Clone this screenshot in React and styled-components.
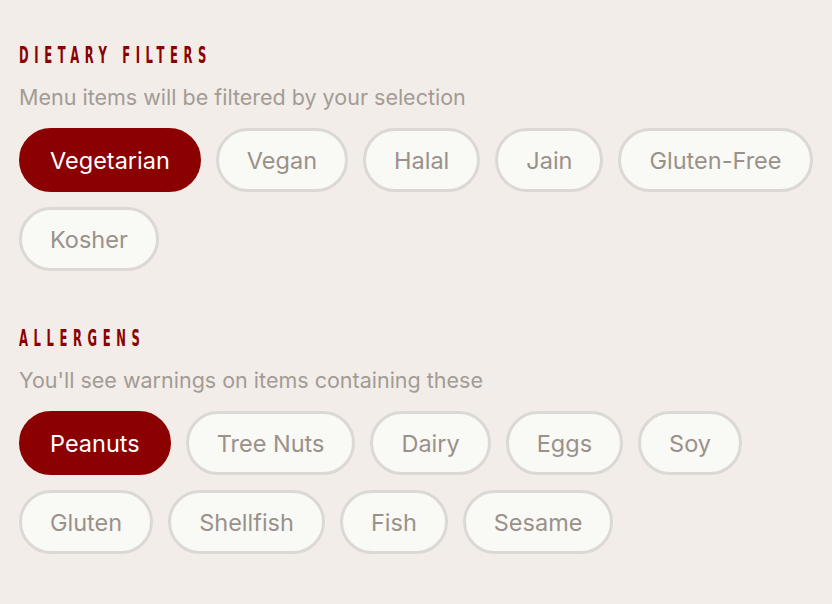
import styled, { createGlobalStyle } from "styled-components";

const Global = createGlobalStyle`
  html, body {
    margin: 0;
    padding: 0;
    background: #f2ede8;
  }
  body {
    font-family: Inter, "Noto Sans", sans-serif;
  }
`;

const Page = styled.div`
  padding: 40px 19px;
  display: flex;
  flex-direction: column;
  gap: 52px;
`;

const Section = styled.section`
  display: flex;
  flex-direction: column;
`;

// condensed display heading, squeezed to match the narrow caps
const Heading = styled.h2`
  margin: 0;
  font-family: "DejaVu Sans Condensed", "Liberation Sans Narrow", sans-serif;
  font-weight: 700;
  font-size: 23px;
  line-height: 30px;
  letter-spacing: 10px;
  color: #8b0000;
  text-transform: uppercase;
  transform: scaleX(0.56);
  transform-origin: left center;
  white-space: nowrap;
`;

const Sub = styled.p`
  margin: 13px 0 17px;
  font-size: 21.5px;
  line-height: 28px;
  color: #a39b95;
`;

const Chips = styled.div`
  display: flex;
  flex-wrap: wrap;
  gap: 15px;
`;

const Chip = styled.button`
  box-sizing: border-box;
  height: 64px;
  padding: 0 28px;
  border-radius: 32px;
  border: 3px solid ${(p) => (p.$active ? "#8b0000" : "#dcd9d4")};
  background: ${(p) => (p.$active ? "#8b0000" : "#f9f9f5")};
  color: ${(p) => (p.$active ? "#ffffff" : "#9a918b")};
  font-family: Inter, "Noto Sans", sans-serif;
  font-size: 23.5px;
  cursor: pointer;
`;

const dietary = ["Vegetarian", "Vegan", "Halal", "Jain", "Gluten-Free", "Kosher"];
const allergens = ["Peanuts", "Tree Nuts", "Dairy", "Eggs", "Soy", "Gluten", "Shellfish", "Fish", "Sesame"];

function Group({ title, sub, items, active }) {
  return (
    <Section>
      <Heading>{title}</Heading>
      <Sub>{sub}</Sub>
      <Chips>
        {items.map((it) => (
          <Chip key={it} $active={it === active}>
            {it}
          </Chip>
        ))}
      </Chips>
    </Section>
  );
}

export default function App() {
  return (
    <>
      <Global />
      <Page>
        <Group
          title="Dietary Filters"
          sub="Menu items will be filtered by your selection"
          items={dietary}
          active="Vegetarian"
        />
        <Group
          title="Allergens"
          sub="You'll see warnings on items containing these"
          items={allergens}
          active="Peanuts"
        />
      </Page>
    </>
  );
}
